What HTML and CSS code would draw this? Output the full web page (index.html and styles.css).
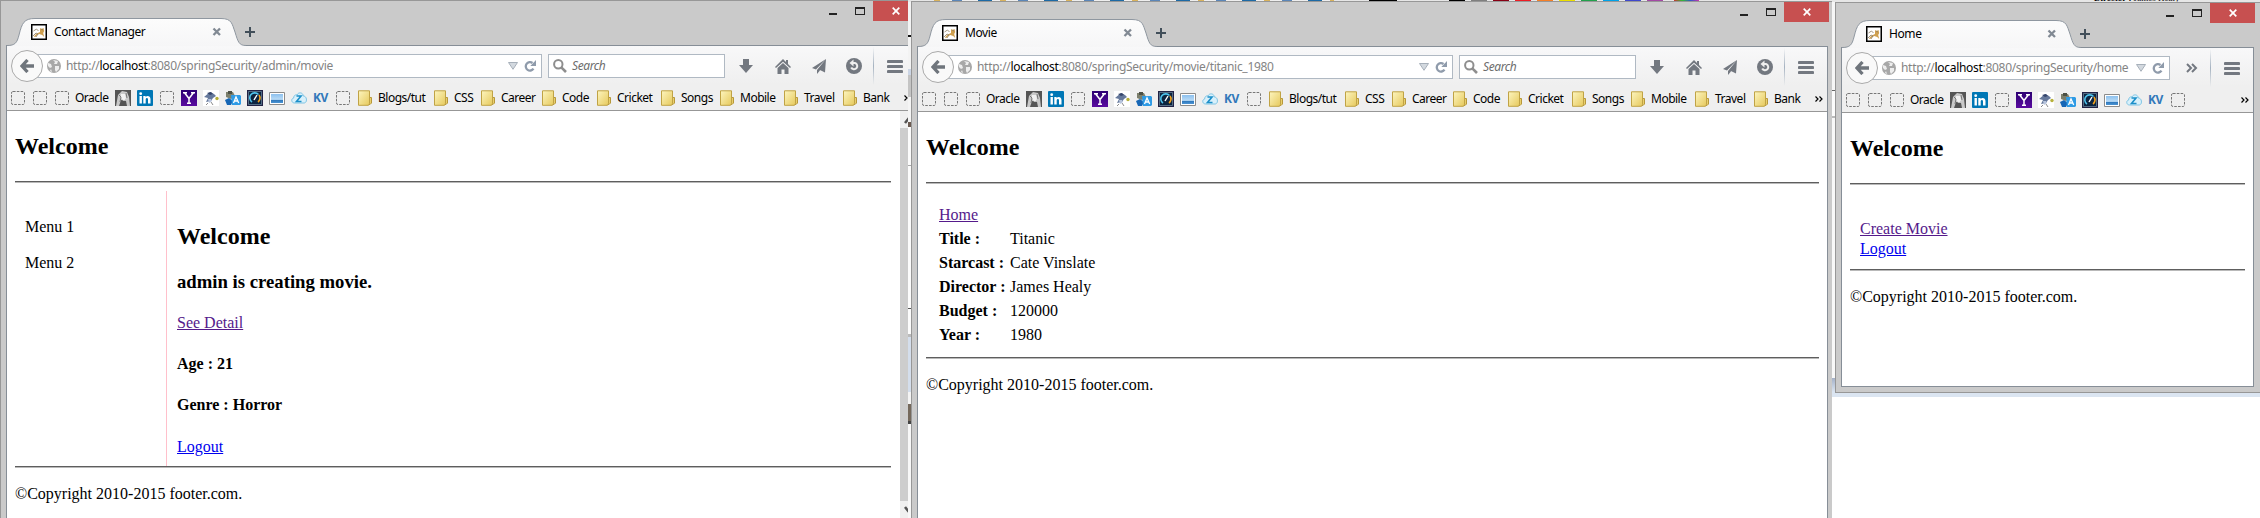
FILE: index.html
```html
<!DOCTYPE html>
<html lang="en">
<head>
<meta charset="utf-8">
<title>Contact Manager</title>
<link rel="stylesheet" href="styles.css">
</head>
<body>
<svg class="defs" aria-hidden="true">
  <defs>
    <linearGradient id="gTab" x1="0" y1="0" x2="0" y2="1"><stop offset="0" stop-color="#fcfcfc"/><stop offset="1" stop-color="#f6f6f7"/></linearGradient>
    <linearGradient id="gFolder" x1="0" y1="0" x2="1" y2="1"><stop offset="0" stop-color="#fdf5bf"/><stop offset="1" stop-color="#e6c95c"/></linearGradient>
    <linearGradient id="gYahoo" x1="0" y1="0" x2="0" y2="1"><stop offset="0" stop-color="#2c0072"/><stop offset="1" stop-color="#5a0ba0"/></linearGradient>
    <linearGradient id="gSky" x1="0" y1="0" x2="0" y2="1"><stop offset="0" stop-color="#8cc0ee"/><stop offset=".6" stop-color="#b9dbf6"/><stop offset=".7" stop-color="#3079bd"/><stop offset="1" stop-color="#4c95d4"/></linearGradient>
  </defs>
  <symbol id="tab" viewBox="0 0 240 28">
    <path d="M0 27.5C8 27.5 10 25 12 17C15 5 17 .5 28 .5H214C225 .5 225 6 228 14C231 24 232 27.5 239 27.5V28H0Z" fill="url(#gTab)"/>
    <path d="M0 27.5C8 27.5 10 25 12 17C15 5 17 .5 28 .5H214C225 .5 225 6 228 14C231 24 232 27.5 239 27.5" fill="none" stroke="#8f97a0"/>
  </symbol>
  <symbol id="cat" viewBox="0 0 16 16">
    <path d="M.75.75h14.5v14.5H.75z" fill="#fff" stroke="#000" stroke-width="1.5"/>
    <path d="M3 13c1-3 4-4 6-5l0-4 1.500 1 2-1 .7 3-1 2 1 4-2-2-3-1-2 1-2 2z" fill="#cfa050"/>
    <path d="M2 12l3-3 2 1-2 3M2.500 7l3-2 2 2M10 5l2 1" fill="none" stroke="#8a7a60" stroke-width=".8"/>
  </symbol>
  <symbol id="close" viewBox="0 0 10 10"><path d="M1.500 1.500l6.500 6.500M8 1.500l-6.500 6.500" stroke="#818993" stroke-width="2.300"/></symbol>
  <symbol id="plus" viewBox="0 0 10 10"><path d="M5 0v10M0 5h10" stroke="#424f5a" stroke-width="2"/></symbol>
  <symbol id="wclose" viewBox="0 0 8 8"><path d="M.7.7l6.600 6.600M7.300.7L.7 7.300" stroke="#fff" stroke-width="1.700"/></symbol>
  <symbol id="back" viewBox="0 0 14 14"><path d="M7.500 1L2 7l5.500 6M2 7h12" fill="none" stroke="#6f757c" stroke-width="3.300"/></symbol>
  <symbol id="globe" viewBox="0 0 14 14"><circle cx="7" cy="7" r="7" fill="#a8a8a8"/><path d="M1 4l3 1 1 3-2 1-2-2zM6 1l2 2-1 2 3 0 1-3zM8 7l4 0 0 3-3 3-1-2zM4 10l1 3-2-1z" fill="#eee"/></symbol>
  <symbol id="drop" viewBox="0 0 10 8"><path d="M.5.5h9L5 7.300z" fill="#d3d9df" stroke="#a7b0ba"/></symbol>
  <symbol id="reload" viewBox="0 0 12 12"><path d="M8.500 3A4.200 4.200 0 1 0 9.500 8.700" fill="none" stroke="#8f9bab" stroke-width="2.300"/><path d="M12 0v6H6.300z" fill="#8f9bab"/></symbol>
  <symbol id="mag" viewBox="0 0 14 14"><circle cx="5.300" cy="5.300" r="4.200" fill="none" stroke="#8e8e8e" stroke-width="2"/><path d="M8.300 8.300L13 13" stroke="#8e8e8e" stroke-width="2.600"/></symbol>
  <symbol id="down" viewBox="0 0 14 14"><path d="M4 0h6v6h4L7 14 0 6h4z" fill="#737880"/></symbol>
  <symbol id="home" viewBox="0 0 16 15"><path d="M8 0l3 3V1h2v4l3 3-1 1L8 2.700 1 9 0 8zM8 4l5.500 5v6H9.500v-4.500h-3V15h-4V9z" fill="#737880"/></symbol>
  <symbol id="plane" viewBox="0 0 14 15"><path d="M14 0L0 9l4 1.500zM14 0L5 11v4l2.500-3zM14 0L8 11l5 2.500z" fill="#737880"/></symbol>
  <symbol id="undo" viewBox="0 0 16 16"><circle cx="8" cy="8" r="8" fill="#737880"/><path d="M6 5h3a3.200 3.200 0 1 1-3.800 4.500" fill="none" stroke="#efefef" stroke-width="2"/><path d="M3.500 5l4-3.500v7z" fill="#efefef"/></symbol>
  <symbol id="menu" viewBox="0 0 16 13"><path d="M1.300 1.500h13.400M1.300 6.500h13.400M1.300 11.500h13.400" stroke="#737880" stroke-width="3" stroke-linecap="round"/></symbol>
  <symbol id="more" viewBox="0 0 12 10"><path d="M1 1l4 4-4 4M6 1l4 4-4 4" fill="none" stroke="#737880" stroke-width="2"/></symbol>
  <symbol id="chev" viewBox="0 0 8 6"><path d="M.5.500L3 3 .5 5.500M4.500.500L7 3 4.500 5.500" fill="none" stroke="#000" stroke-width="1.200"/></symbol>
  <symbol id="blank" viewBox="0 0 16 16"><rect x="1.500" y="1.500" width="13" height="13" rx="1.500" fill="none" stroke="#777" stroke-dasharray="2.600 1.200"/></symbol>
  <symbol id="photo" viewBox="0 0 16 16"><path d="M0 0h16v16H0z" fill="#555"/><path d="M1 16L3 5l4-4 5 1 2 5 1 9h-3l-1-5-5-1-2 6z" fill="#c9c9c9"/><path d="M6 4l4 0 1 4-2 3-3-3z" fill="#f1f1f1"/><path d="M4 5l2 2-1 5M11 3l1 5" stroke="#777" fill="none"/></symbol>
  <symbol id="in" viewBox="0 0 16 16"><rect width="16" height="16" rx="1" fill="#0077b5"/><path d="M2.500 6h2.400v7.500H2.500zM6.300 6h2.300v1c1.200-1.800 4.900-1.500 4.900 2v4.500H11V9.600c0-2.100-2.300-2-2.300 0v3.900H6.300z" fill="#fff"/><circle cx="3.700" cy="3.700" r="1.400" fill="#fff"/></symbol>
  <symbol id="yh" viewBox="0 0 16 16"><path d="M0 0h16v16H0z" fill="url(#gYahoo)"/><path d="M3.500 2.800L8 8.500l4.500-5.700M8 8v5.500M2 2.800h4M10 2.800h4M6 13.300h4" stroke="#fff" stroke-width="1.500" fill="none"/></symbol>
  <symbol id="bird" viewBox="0 0 16 16"><path d="M0 0h16v16H0z" fill="#fff"/><path d="M1 7l6-5 4 2 2 2-3 2-2 3-5 1 2-4z" fill="#66799c"/><path d="M4 3l4-1 2 2-3 1z" fill="#35456b"/><path d="M5 9l3 0 1 2-3 2z" fill="#b7c4dd"/><path d="M5 13l-2 2M8 12l2 3" stroke="#8a8a8a"/><circle cx="14" cy="8.500" r="1.700" fill="#b6b03a"/></symbol>
  <symbol id="trans" viewBox="0 0 16 16"><path d="M1 2h7l2 4-4 3-5-2z" fill="#7c7f6c"/><path d="M3 1h4v3H3z" fill="#4c5045"/><path d="M0 10l4-2 4 3-2 4-4 0z" fill="#1666b5"/><path d="M6 5h9l1 1v8l-1 1H7z" fill="#2f9be5"/><path d="M8.500 13L11 7l2.700 6M9.500 11h3.500" fill="none" stroke="#fff" stroke-width="1.300"/></symbol>
  <symbol id="gauge" viewBox="0 0 16 16"><rect x=".5" y=".5" width="15" height="15" fill="#0c2440" stroke="#224"/><path d="M1.500 1.500h13v13h-13z" fill="none" stroke="#88a1b5" stroke-width=".6"/><path d="M5 12A5 5 0 1 1 11.500 4.500" fill="none" stroke="#4fc4ee" stroke-width="1.600"/><path d="M12 5A5 5 0 0 1 11 12" fill="none" stroke="#f3a21c" stroke-width="1.600"/><path d="M7 10l3-5" stroke="#fff" stroke-width="1.400"/></symbol>
  <symbol id="pic" viewBox="0 0 16 16"><path d="M.5 2.500h15v12H.5z" fill="#fff" stroke="#8b8b8b"/><path d="M2 4h12v9H2z" fill="url(#gSky)"/></symbol>
  <symbol id="cloud" viewBox="0 0 16 16"><path d="M3.500 13C.2 13-.2 8.500 2.700 8 2.700 5 5 4.500 6 5c1-3 6-3 6.300 1 4 0 4.200 7 .7 7z" fill="#d8f0fb" stroke="#74bfe2" stroke-width=".9"/><path d="M5.500 6h4.500l-4.500 5.500h5" fill="none" stroke="#1c8fc9" stroke-width="1.600"/></symbol>
  <symbol id="folder" viewBox="0 0 16 16"><path d="M12.500 7.500h2v5.500l-1.500 1.500h-1z" fill="#e9cf6c" stroke="#b7983a"/><path d="M1.500.8h11v12.500l-1 2h-10z" fill="url(#gFolder)" stroke="#c0a345"/></symbol>
  <symbol id="scroll" viewBox="0 0 10 10"><path d="M1 8l4-5 4 5" fill="none" stroke="#555" stroke-width="2.600"/></symbol>
</svg>

<main class="desktop">
  <div class="top-strip">
    <span class="bits"></span>
    <span class="swatches"><i class="sw-black wide"></i><i class="sw-black"></i><i class="sw-gray"></i><i class="sw-maroon"></i><i class="sw-red"></i><i class="sw-orange"></i><i class="sw-yellow"></i><i class="sw-green"></i><i class="sw-blue"></i><i class="sw-indigo"></i><i class="sw-purple"></i><i class="sw-rainbow"></i></span>
    <span class="peek"><b>Director :</b> James Healy</span>
  </div>
  <div class="gap-strip gap-left"></div>
  <div class="gap-strip gap-right"></div>
  <div class="under-glow"></div>

  <section class="win win-admin">
    <header class="titlebar">
      <div class="tab"><svg class="tab-shape"><use href="#tab"/></svg><svg class="favicon"><use href="#cat"/></svg><span class="tab-title">Contact Manager</span><svg class="tab-close"><use href="#close"/></svg></div>
      <svg class="new-tab"><use href="#plus"/></svg>
      <div class="controls"><span class="min"></span><span class="max"></span><span class="wclose"><svg><use href="#wclose"/></svg></span></div>
    </header>
    <div class="client">
      <div class="chrome">
        <div class="nav">
          <span class="back"><svg><use href="#back"/></svg></span>
          <div class="field url"><svg class="globe"><use href="#globe"/></svg><span class="addr">http://<b>localhost</b>:8080/springSecurity/admin/movie</span><svg class="drop"><use href="#drop"/></svg><svg class="reload"><use href="#reload"/></svg></div>
          <div class="field search"><svg class="mag"><use href="#mag"/></svg><em>Search</em></div>
          <div class="tools"><svg class="down"><use href="#down"/></svg><svg class="home"><use href="#home"/></svg><svg class="plane"><use href="#plane"/></svg><svg class="undo"><use href="#undo"/></svg></div>
          <span class="sep"></span><svg class="menu"><use href="#menu"/></svg>
        </div>
        <div class="marks">
          <svg><use href="#blank"/></svg><svg><use href="#blank"/></svg><svg><use href="#blank"/></svg><span class="oracle">Oracle</span>
          <svg><use href="#photo"/></svg><svg><use href="#in"/></svg><svg><use href="#blank"/></svg><svg><use href="#yh"/></svg><svg><use href="#bird"/></svg><svg><use href="#trans"/></svg><svg><use href="#gauge"/></svg><svg><use href="#pic"/></svg><svg><use href="#cloud"/></svg><span class="kv">KV</span><svg><use href="#blank"/></svg>
          <div class="folders"><span><svg><use href="#folder"/></svg>Blogs/tut</span><span><svg><use href="#folder"/></svg>CSS</span><span><svg><use href="#folder"/></svg>Career</span><span><svg><use href="#folder"/></svg>Code</span><span><svg><use href="#folder"/></svg>Cricket</span><span><svg><use href="#folder"/></svg>Songs</span><span><svg><use href="#folder"/></svg>Mobile</span><span><svg><use href="#folder"/></svg>Travel</span><span><svg><use href="#folder"/></svg>Bank</span></div>
          <svg class="chev"><use href="#chev"/></svg>
        </div>
      </div>
      <div class="view">
        <div class="page">
          <h2>Welcome</h2>
          <hr>
          <div class="cols">
            <div class="side"><p>Menu 1</p><p>Menu 2</p></div>
            <div class="body"><h2>Welcome</h2><h3>admin is creating movie.</h3><p><a class="visited">See Detail</a></p><h4>Age : 21</h4><h4>Genre : Horror</h4><p class="out"><a>Logout</a></p></div>
          </div>
          <hr>
          <p class="foot">©Copyright 2010-2015 footer.com.</p>
        </div>
        <div class="scrollbar"><svg><use href="#scroll"/></svg><span></span><svg class="flip"><use href="#scroll"/></svg></div>
      </div>
    </div>
  </section>

  <section class="win win-movie">
    <header class="titlebar">
      <div class="tab"><svg class="tab-shape"><use href="#tab"/></svg><svg class="favicon"><use href="#cat"/></svg><span class="tab-title">Movie</span><svg class="tab-close"><use href="#close"/></svg></div>
      <svg class="new-tab"><use href="#plus"/></svg>
      <div class="controls"><span class="min"></span><span class="max"></span><span class="wclose"><svg><use href="#wclose"/></svg></span></div>
    </header>
    <div class="client">
      <div class="chrome">
        <div class="nav">
          <span class="back"><svg><use href="#back"/></svg></span>
          <div class="field url"><svg class="globe"><use href="#globe"/></svg><span class="addr">http://<b>localhost</b>:8080/springSecurity/movie/titanic_1980</span><svg class="drop"><use href="#drop"/></svg><svg class="reload"><use href="#reload"/></svg></div>
          <div class="field search"><svg class="mag"><use href="#mag"/></svg><em>Search</em></div>
          <div class="tools"><svg class="down"><use href="#down"/></svg><svg class="home"><use href="#home"/></svg><svg class="plane"><use href="#plane"/></svg><svg class="undo"><use href="#undo"/></svg></div>
          <span class="sep"></span><svg class="menu"><use href="#menu"/></svg>
        </div>
        <div class="marks">
          <svg><use href="#blank"/></svg><svg><use href="#blank"/></svg><svg><use href="#blank"/></svg><span class="oracle">Oracle</span>
          <svg><use href="#photo"/></svg><svg><use href="#in"/></svg><svg><use href="#blank"/></svg><svg><use href="#yh"/></svg><svg><use href="#bird"/></svg><svg><use href="#trans"/></svg><svg><use href="#gauge"/></svg><svg><use href="#pic"/></svg><svg><use href="#cloud"/></svg><span class="kv">KV</span><svg><use href="#blank"/></svg>
          <div class="folders"><span><svg><use href="#folder"/></svg>Blogs/tut</span><span><svg><use href="#folder"/></svg>CSS</span><span><svg><use href="#folder"/></svg>Career</span><span><svg><use href="#folder"/></svg>Code</span><span><svg><use href="#folder"/></svg>Cricket</span><span><svg><use href="#folder"/></svg>Songs</span><span><svg><use href="#folder"/></svg>Mobile</span><span><svg><use href="#folder"/></svg>Travel</span><span><svg><use href="#folder"/></svg>Bank</span></div>
          <svg class="chev"><use href="#chev"/></svg>
        </div>
      </div>
      <div class="view">
        <div class="page">
          <h2>Welcome</h2>
          <hr>
          <dl class="movie">
            <dt class="plain"><a class="visited">Home</a></dt><dd></dd>
            <dt>Title :</dt><dd>Titanic</dd>
            <dt>Starcast :</dt><dd>Cate Vinslate</dd>
            <dt>Director :</dt><dd>James Healy</dd>
            <dt>Budget :</dt><dd>120000</dd>
            <dt>Year :</dt><dd>1980</dd>
          </dl>
          <hr>
          <p class="foot">©Copyright 2010-2015 footer.com.</p>
        </div>
      </div>
    </div>
  </section>

  <section class="win win-home">
    <header class="titlebar">
      <div class="tab"><svg class="tab-shape"><use href="#tab"/></svg><svg class="favicon"><use href="#cat"/></svg><span class="tab-title">Home</span><svg class="tab-close"><use href="#close"/></svg></div>
      <svg class="new-tab"><use href="#plus"/></svg>
      <div class="controls"><span class="min"></span><span class="max"></span><span class="wclose"><svg><use href="#wclose"/></svg></span></div>
    </header>
    <div class="client">
      <div class="chrome">
        <div class="nav">
          <span class="back"><svg><use href="#back"/></svg></span>
          <div class="field url"><svg class="globe"><use href="#globe"/></svg><span class="addr">http://<b>localhost</b>:8080/springSecurity/home</span><svg class="drop"><use href="#drop"/></svg><svg class="reload"><use href="#reload"/></svg></div>
          <svg class="more"><use href="#more"/></svg>
          <span class="sep"></span><svg class="menu"><use href="#menu"/></svg>
        </div>
        <div class="marks">
          <svg><use href="#blank"/></svg><svg><use href="#blank"/></svg><svg><use href="#blank"/></svg><span class="oracle">Oracle</span>
          <svg><use href="#photo"/></svg><svg><use href="#in"/></svg><svg><use href="#blank"/></svg><svg><use href="#yh"/></svg><svg><use href="#bird"/></svg><svg><use href="#trans"/></svg><svg><use href="#gauge"/></svg><svg><use href="#pic"/></svg><svg><use href="#cloud"/></svg><span class="kv">KV</span><svg><use href="#blank"/></svg>
          <svg class="chev"><use href="#chev"/></svg>
        </div>
      </div>
      <div class="view">
        <div class="page">
          <h2>Welcome</h2>
          <hr>
          <div class="links"><a class="visited">Create Movie</a><a>Logout</a></div>
          <hr>
          <p class="foot">©Copyright 2010-2015 footer.com.</p>
        </div>
      </div>
    </div>
  </section>
</main>
</body>
</html>
```

FILE: styles.css
```css
* { box-sizing: border-box; }
body { margin: 0; background: #fff; font: 16px/20px "Liberation Serif", serif; color: #000; }
h2, h3, h4, p, dl, dd, hr { margin: 0; }
svg { display: block; flex: none; }
.defs { position: absolute; width: 0; height: 0; }

.desktop { position: relative; width: 2260px; height: 518px; overflow: hidden; background: #fff; }

/* pieces of the windows behind */
.top-strip { position: absolute; left: 908px; top: 0; width: 1352px; height: 2px; overflow: hidden; background: #e6e6e6; }
.bits { position: absolute; left: 26px; top: 0; width: 400px; height: 1px; background: repeating-linear-gradient(90deg, #d9b25c 0 6px, #eee 6px 18px, #5b86b8 18px 28px, #eee 28px 44px, #1d6aa5 44px 58px, #eee 58px 66px); }
.swatches { position: absolute; left: 461px; top: 0; display: flex; gap: 6px; }
.swatches i { width: 16px; height: 1px; }
.swatches .wide { width: 28px; margin-right: 46px; }
.sw-black { background: #000; }
.sw-gray { background: #7f7f7f; }
.sw-maroon { background: #880015; }
.sw-red { background: #ed1c24; }
.sw-orange { background: #f57f27; }
.sw-yellow { background: #ebdf00; }
.sw-green { background: #22a14c; }
.sw-blue { background: #00a2e8; }
.sw-indigo { background: #3f48cc; }
.sw-purple { background: #a349a4; }
.swatches .sw-rainbow { width: 25px; margin-left: 5px; background: linear-gradient(90deg, #c33, #3b3, #35c, #c3a); }
.peek { position: absolute; left: 1186px; top: -8px; font-size: 9px; line-height: 12px; }
.gap-strip { position: absolute; width: 4px; }
.gap-left { left: 908px; top: 2px; height: 516px; background: linear-gradient(#f3f3f3 0 33px, #111 33px 35px, #f3f3f3 35px 67px, #ccd6e6 67px 73px, #c4c4c4 73px 95px, #f5f5f5 95px 120px, #6b5a50 120px 125px, #fcfcfc 125px 163px, #aaa 163px 164px, #fcfcfc 164px 306px, #555 306px 307px, #fcfcfc 307px 332px, #bbb 332px 335px, #d4deec 335px 390px, #f4f4f4 390px 402px, #75695c 402px 419px, #444 419px 422px, #f8f8f8 422px); }
.gap-right { left: 1832px; top: 2px; height: 376px; background: linear-gradient(#f6f6f6 0 88px, #666 88px 89px, #fcfcfc 89px 114px, #bbb 114px 116px, #f8f8f8 116px); }
.under-glow { position: absolute; left: 1832px; top: 378px; width: 428px; height: 19px; background: linear-gradient(#a4b1c8, #dbe5f1 14px); }

/* window frame */
.win { position: absolute; display: flex; flex-direction: column; background: #cacaca; border: solid #979797; border-width: 1px 0 0 1px; overflow: hidden; font-family: "Noto Sans", sans-serif; }
.win-admin { left: 0; top: 0; width: 908px; height: 518px; }
.win-movie { left: 911px; top: 1px; width: 921px; height: 517px; }
.win-home { left: 1835px; top: 2px; width: 425px; height: 391px; border-bottom-width: 1px; }
.titlebar { flex: none; display: flex; height: 45px; margin-bottom: -1px; position: relative; z-index: 1; }
.tab { position: relative; display: flex; align-items: center; width: 240px; height: 28px; margin: 17px 0 0 6px; padding-left: 24px; }
.tab-shape { position: absolute; left: 0; top: 0; width: 240px; height: 28px; }
.favicon { position: relative; width: 16px; height: 16px; }
.tab-title { position: relative; flex: 1; margin-left: 7px; font-size: 12px; letter-spacing: -.4px; line-height: 16px; }
.tab-close { position: relative; width: 10px; height: 10px; margin-right: 25px; }
.new-tab { width: 10px; height: 10px; margin: 26px 0 0 -2px; }
.controls { display: flex; margin-left: auto; height: 20px; }
.min { width: 8px; height: 2px; margin: 12px 18px 0 0; background: #222; }
.max { width: 10px; height: 8px; margin: 6px 8px 0 0; border: 1px solid #222; border-top-width: 2px; }
.wclose { display: flex; align-items: center; justify-content: center; width: 45px; background: #c75050; }
.wclose svg { width: 8px; height: 8px; }
.win-admin .controls { margin-right: -10px; }
.win-admin .wclose { flex: none; }
.win-movie .controls { margin-right: 3px; }
.win-home .controls { margin-right: 5px; }

.client { flex: 1; display: flex; flex-direction: column; min-height: 0; margin-left: 5px; border: solid #868e97; border-width: 1px 0 0 1px; background: #fff; }
.win-admin .client { width: 911px; flex-shrink: 0; }
.win-movie .client { margin-right: 4px; border-right-width: 1px; }
.win-home .client { margin: 0 6px 5px 5px; border-width: 1px; }

/* toolbar */
.chrome { flex: none; height: 65px; background: linear-gradient(#f8f8f9, #efefef 60%); border-bottom: 1px solid #979797; }
.nav { display: flex; align-items: center; height: 40px; padding-left: 4px; }
.back { position: relative; z-index: 1; flex: none; display: flex; align-items: center; justify-content: center; width: 32px; height: 32px; border: 1px solid #aaa; border-radius: 50%; background: #f9f9f9; }
.back svg { width: 14px; height: 14px; }
.field { flex: none; display: flex; align-items: center; height: 24px; background: #fff; border: 1px solid #b0b9c3; font-size: 12px; }
.url { width: 505px; margin-left: -6px; padding: 0 5px 0 9px; }
.globe { width: 14px; height: 14px; margin-right: 5px; }
.addr { flex: 1; color: #848484; white-space: nowrap; line-height: 16px; letter-spacing: -.3px; }
.addr b { font-weight: 400; color: #000; }
.drop { width: 10px; height: 8px; margin-right: 6px; }
.reload { width: 12px; height: 12px; }
.search { width: 177px; margin-left: 6px; padding-left: 4px; }
.mag { width: 14px; height: 14px; margin-right: 5px; }
.search em { color: #6d6d6d; letter-spacing: -.4px; }
.tools { display: flex; align-items: center; margin-left: 14px; }
.down { width: 14px; height: 14px; margin-right: 22px; }
.home { width: 16px; height: 15px; margin-right: 21px; }
.plane { width: 14px; height: 15px; margin-right: 20px; }
.undo { width: 16px; height: 16px; margin-right: 11px; }
.sep { flex: none; width: 1px; height: 38px; margin-right: 13px; background: linear-gradient(transparent, #a5b2c0, transparent); }
.menu { width: 16px; height: 13px; }
.win-home .url { width: 298px; }
.more { width: 12px; height: 10px; margin: 0 12px 0 16px; }

/* bookmarks row: icons repeat every 22px */
.marks { display: flex; align-items: center; gap: 6px; height: 24px; padding-left: 3px; font-size: 12px; line-height: 16px; }
.marks svg { width: 16px; height: 16px; }
.oracle { width: 34px; margin: 0 0 0 -1px; letter-spacing: -.5px; white-space: nowrap; }
.kv { width: 16px; font: bold 12px/16px "Open Sans", sans-serif; letter-spacing: -.4px; color: #3178ba; }
.folders { display: grid; grid-template-columns: 76px 47px 61px 55px 64px 59px 64px 59px 60px; width: 545px; }
.folders span { display: flex; align-items: center; gap: 5px; letter-spacing: -.5px; white-space: nowrap; }
.marks .chev { width: 8px; height: 6px; margin-left: -4px; }
.win-home .marks .chev { margin: 0 4px 0 auto; }

/* web page */
.view { flex: 1; display: flex; font-family: "Liberation Serif", serif; }
.page { flex: 1; padding: 21px 8px 0; }
.win-admin .page { padding-right: 9px; }
.page h2 { font-size: 24px; line-height: 28px; }
.page hr { height: 2px; border: solid; border-width: 1px 0; border-color: #5e5e5e #b9b9b9 #b9b9b9; }
.page > h2 { margin-bottom: 21px; }
.page a { color: #00e; text-decoration: underline; }
.page a.visited { color: #551a8b; }
.foot { margin-top: 16px; }
.cols { display: flex; height: 275px; margin-top: 8px; }
.side { width: 152px; padding: 26px 10px; border-right: 1px solid #ffc0cb; }
.side p + p { margin-top: 16px; }
.body { padding: 31px 0 0 10px; }
.body h3 { margin: 21px 0 20px; font-size: 18.720px; line-height: 22px; }
.body h4 { margin: 21px 0; }
.body .out { margin-top: 22px; }
.movie { display: grid; grid-template-columns: 71px 1fr; grid-auto-rows: 24px; line-height: 24px; padding: 19px 13px 10px; }
.movie dt { font-weight: bold; white-space: nowrap; }
.movie .plain { font-weight: 400; }
.links { display: flex; flex-direction: column; align-items: flex-start; padding: 34px 10px 10px; }
.scrollbar { width: 17px; display: flex; flex-direction: column; align-items: center; background: #f0f0f0; }
.scrollbar span { flex: 1; width: 17px; background: #cdcdcd; }
.scrollbar svg { width: 10px; height: 10px; margin: 4px 0 3px; }
.scrollbar .flip { transform: rotate(180deg); }
```
